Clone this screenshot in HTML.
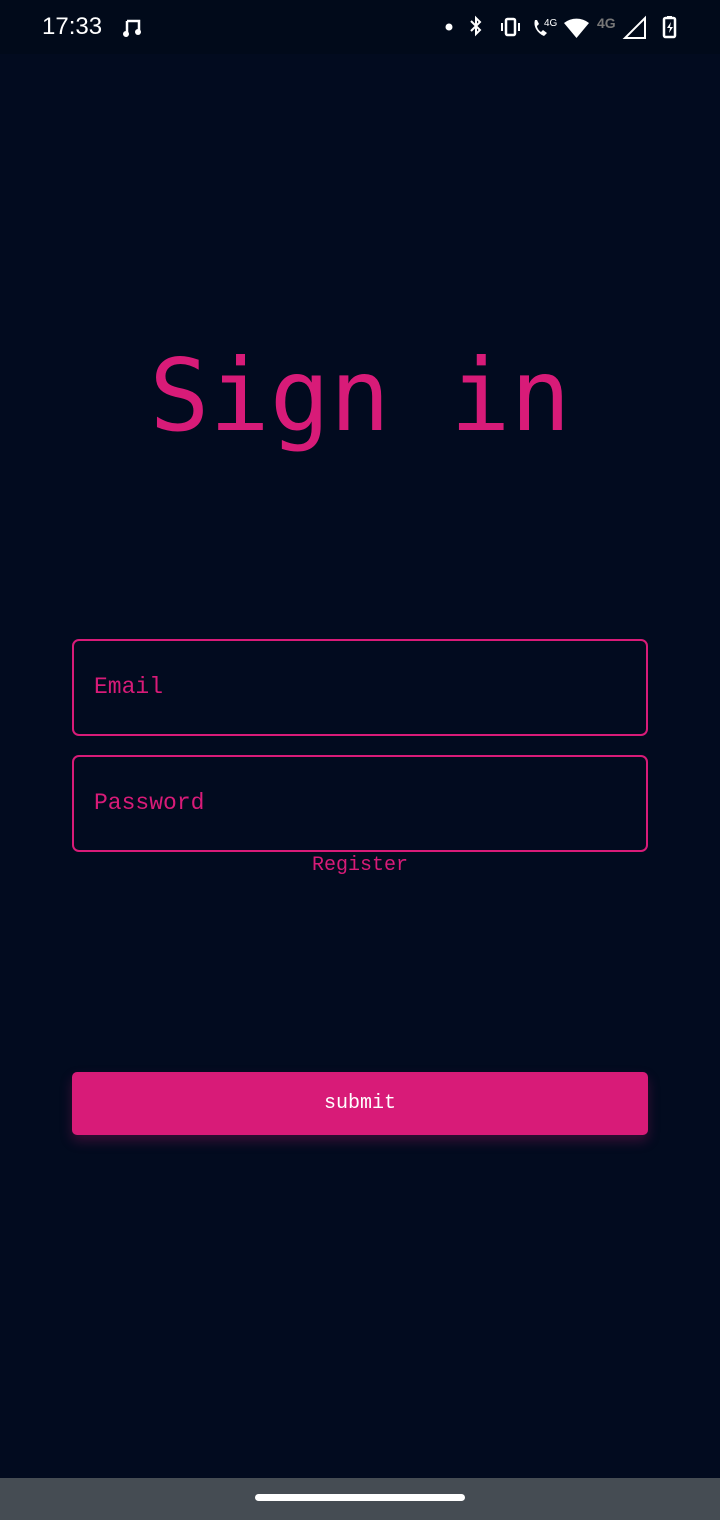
<!DOCTYPE html>
<html><head><meta charset="utf-8"><style>
*{margin:0;padding:0;box-sizing:border-box}
html,body{width:720px;height:1520px;background:#020b1f;overflow:hidden;position:relative;font-family:"Liberation Mono","DejaVu Sans Mono",monospace}
.sb{position:absolute;top:0;left:0;width:720px;height:54px;background:#010a1a;color:#fff;font-family:"Liberation Sans",sans-serif}
.time{position:absolute;left:42px;top:13px;font-size:24px}
.title{position:absolute;left:0;width:720px;top:336px;text-align:center;color:#d81b78;font-size:100px;line-height:120px;font-family:"DejaVu Sans Mono",monospace;letter-spacing:0}
.inp{position:absolute;left:72px;width:576px;height:97px;border:2px solid #d81b78;border-radius:7px;color:#d81b78;font-size:23px;padding-left:20px;line-height:93px}
.reg{position:absolute;left:0;width:720px;top:852px;text-align:center;color:#d81b78;font-size:20px;line-height:28px}
.btn{position:absolute;left:72px;top:1072px;width:576px;height:63px;background:#d81b78;border-radius:5px;color:#fff;font-size:20px;text-align:center;line-height:63px;box-shadow:0 6px 12px rgba(216,27,120,0.25)}
.nav{position:absolute;left:0;top:1478px;width:720px;height:42px;background:#454c53}
.pill{position:absolute;left:255px;top:16px;width:210px;height:7px;border-radius:4px;background:#fff}
</style></head><body>
<div class="sb">
<div class="time">17:33</div>
<svg style="position:absolute;left:122px;top:17px" width="22" height="22" viewBox="0 0 22 22"><path d="M5 4h12v11" stroke="#fff" stroke-width="2.5" fill="none"/><line x1="5" y1="4" x2="5" y2="16" stroke="#fff" stroke-width="2.5"/><circle cx="4" cy="17" r="3" fill="#fff"/><circle cx="16" cy="15" r="3" fill="#fff"/></svg>
<svg style="position:absolute;left:440px;top:14px" width="250" height="28" viewBox="0 0 250 28">
<circle cx="9" cy="13" r="3.5" fill="#fff"/>
<path d="M31 7l9 9-4 4V4l4 4-9 9" stroke="#fff" stroke-width="2" fill="none"/>
<rect x="66" y="5" width="9" height="16" rx="1.5" stroke="#fff" stroke-width="2.5" fill="none"/><line x1="62" y1="9" x2="62" y2="17" stroke="#fff" stroke-width="2"/><line x1="79" y1="9" x2="79" y2="17" stroke="#fff" stroke-width="2"/>
<path d="M95 6c-2 6 2 13 9 16l3-3-4-3-2 2c-2-1-4-4-4-6l2-2-2-4z" fill="#fff"/>
<text x="104" y="12" font-size="10" fill="#fff" font-family="Liberation Sans">4G</text>
<path d="M124 9a20 20 0 0 1 25 0l-12.5 15z" fill="#fff"/>
<text x="157" y="14" font-size="14" fill="#777" font-family="Liberation Sans" font-weight="bold">4G</text>
<path d="M185 24h20V4z" stroke="#fff" stroke-width="2" fill="none"/>
<rect x="224" y="4" width="11" height="19" rx="1.5" stroke="#fff" stroke-width="2.5" fill="none"/><rect x="227" y="2" width="5" height="3" fill="#fff"/><path d="M231 8l-4 6h3l-1 5 4-6h-3z" fill="#fff"/>
</svg>
</div>
<div class="title">Sign in</div>
<div class="inp" style="top:639px">Email</div>
<div class="inp" style="top:755px">Password</div>
<div class="reg">Register</div>
<div class="btn">submit</div>
<div class="nav"><div class="pill"></div></div>
</body></html>
